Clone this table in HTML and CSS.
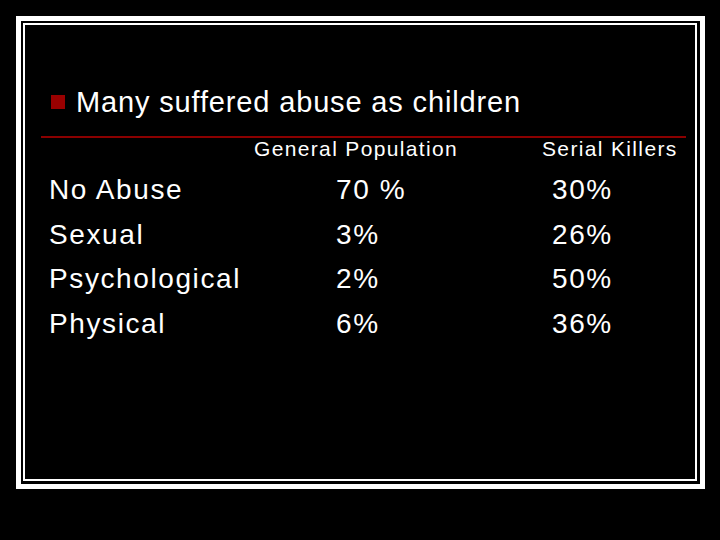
FILE: index.html
```html
<!DOCTYPE html>
<html lang="en">
<head>
    <meta charset="UTF-8">
    <title>Many suffered abuse as children</title>
    <link rel="stylesheet" href="styles.css">
</head>
<body>
    <div class="slide">
        <div class="slide-inner">
            <div class="title">
                <span class="bullet"></span>
                <span class="title-text">Many suffered abuse as children</span>
            </div>
            <div class="rule"></div>

            <div class="table-head">
                <div>General Population</div>
                <div>Serial Killers</div>
            </div>

            <div class="table">
                <div class="label">No Abuse</div>
                <div>70 %</div>
                <div>30%</div>

                <div class="label">Sexual</div>
                <div>3%</div>
                <div>26%</div>

                <div class="label">Psychological</div>
                <div>2%</div>
                <div>50%</div>

                <div class="label">Physical</div>
                <div>6%</div>
                <div>36%</div>
            </div>
        </div>
    </div>
</body>
</html>
```

FILE: styles.css
```css
* {
    margin: 0;
    padding: 0;
    box-sizing: border-box;
}

body {
    font-family: "Liberation Sans", Arial, sans-serif;
    background-color: #000000;
    color: #ffffff;
    width: 720px;
    height: 540px;
    overflow: hidden;
}

.slide {
    margin: 16px 0 0 16px;
    width: 689px;
    height: 473px;
    border: 5px solid #ffffff;
    padding: 2px 3px 3px 2px;
}

.slide-inner {
    height: 100%;
    border: 2px solid #ffffff;
    padding-top: 60px;
}

.title {
    display: flex;
    align-items: center;
    padding-left: 26px;
    height: 34px;
}

.bullet {
    width: 14px;
    height: 14px;
    background: #990000;
    margin-right: 11px;
}

.title-text {
    font-size: 29px;
    line-height: 34px;
    letter-spacing: 0.85px;
}

.rule {
    height: 2px;
    background: #8b0000;
    margin: 17px 9px 0 16px;
}

.table-head {
    display: grid;
    grid-template-columns: 288px 1fr;
    margin-left: 229px;
    font-size: 21px;
    line-height: 22px;
    letter-spacing: 1.35px;
}

.table {
    display: grid;
    grid-template-columns: 287px 216px 1fr;
    padding-left: 24px;
    margin-top: 8px;
    font-size: 28px;
    line-height: 44.5px;
    letter-spacing: 1.6px;
}
```
